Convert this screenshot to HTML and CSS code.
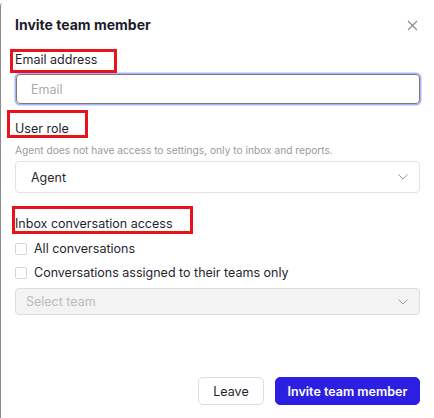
FILE: index.html
```html
<!DOCTYPE html>
<html>
<head>
<meta charset="utf-8">
<link rel="stylesheet" href="styles.css">
</head>
<body>
<div class="dialog">
  <div class="header">
    <h1 class="title">Invite team member</h1>
    <svg class="close" width="11" height="11" viewBox="0 0 11 11"><path d="M1 1L10 10M10 1L1 10" stroke="#8a8a8a" stroke-width="1.1" fill="none"/></svg>
  </div>

  <div class="label label-email">Email address</div>
  <div class="input focus"><span class="placeholder">Email</span></div>

  <div class="label label-role">User role</div>
  <div class="help">Agent does not have access to settings, only to inbox and reports.</div>
  <div class="select">
    <span class="value">Agent</span>
    <svg class="chev" width="10" height="6" viewBox="0 0 10 6"><path d="M0.5 0.5L5 5L9.5 0.5" stroke="#9a9a9a" stroke-width="1" fill="none"/></svg>
  </div>

  <div class="label label-inbox">Inbox conversation access</div>
  <div class="check-row first"><span class="box"></span><span>All conversations</span></div>
  <div class="check-row"><span class="box"></span><span>Conversations assigned to their teams only</span></div>
  <div class="select disabled">
    <span class="value">Select team</span>
    <svg class="chev" width="10" height="6" viewBox="0 0 10 6"><path d="M0.5 0.5L5 5L9.5 0.5" stroke="#9a9a9a" stroke-width="1" fill="none"/></svg>
  </div>

  <div class="footer">
    <button class="btn btn-leave">Leave</button>
    <button class="btn btn-primary">Invite team member</button>
  </div>

  <div class="mark mark-email"></div>
  <div class="mark mark-role"></div>
  <div class="mark mark-inbox"></div>
</div>
</body>
</html>
```
FILE: styles.css
```css
html, body {
  margin: 0;
  padding: 0;
  background: #ffffff;
}
body {
  font-family: Inter, "Noto Sans", sans-serif;
  color: #1f1f2b;
  width: 434px;
  height: 418px;
  overflow: hidden;
}
.dialog {
  position: relative;
  box-sizing: border-box;
  height: 415px;
  margin-top: 3px;
  border-left: 1px solid #8c8c8c;
  border-top-left-radius: 3px;
  padding: 13px 14px 0 14px;
  display: flex;
  flex-direction: column;
}
.header {
  display: flex;
  align-items: center;
  justify-content: space-between;
  height: 18px;
}
.title {
  margin: 0;
  font-size: 14px;
  font-weight: 700;
  line-height: 18px;
  color: #1c1c2c;
}
.close {
  margin-right: 2px;
}
.label {
  font-size: 12.5px;
  line-height: 16px;
  color: #1f1f2b;
}
.label-email { margin-top: 18px; }
.input {
  margin-top: 6px;
  height: 30px;
  box-sizing: border-box;
  border: 1px solid #7a7a7a;
  border-radius: 4px;
  margin-left: 1px;
  display: flex;
  align-items: center;
  padding-left: 14px;
}
.input.focus {
  box-shadow: 0 0 0 1.5px #a9b4f8;
}
.placeholder {
  font-size: 12.5px;
  color: #ababab;
}
.label-role { margin-top: 17px; }
.help {
  margin-top: 6px;
  font-size: 10.2px;
  line-height: 14px;
  color: #9b9b9b;
}
.select {
  margin-top: 4px;
  height: 32px;
  box-sizing: border-box;
  border: 1px solid #e3e3e3;
  border-radius: 4px;
  display: flex;
  align-items: center;
  justify-content: space-between;
  padding: 0 11px 0 15px;
}
.select .value {
  font-size: 12.5px;
  color: #2a2a2a;
}
.label-inbox { margin-top: 23px; }
.check-row {
  display: flex;
  align-items: center;
  gap: 7px;
  font-size: 12.5px;
  line-height: 16px;
  color: #262630;
  margin-top: 8px;
}
.check-row.first { margin-top: 9px; }
.box {
  width: 10px;
  height: 10px;
  border: 1px solid #d6d6d6;
  border-radius: 2px;
  background: #fff;
}
.select.disabled {
  margin-top: 7px;
  height: 27px;
  background: #f3f3f3;
  border-color: #dcdcdc;
  padding-left: 10px;
}
.select.disabled .value {
  color: #bcbcbc;
}
.footer {
  margin-top: auto;
  margin-bottom: 13px;
  display: flex;
  justify-content: flex-end;
  gap: 11px;
}
.btn {
  font-family: Inter, "Noto Sans", sans-serif;
  font-size: 12.5px;
  height: 28px;
  border-radius: 5px;
  box-sizing: border-box;
  cursor: pointer;
}
.btn-leave {
  width: 66px;
  background: #fff;
  border: 1px solid #dedede;
  color: #1f1f2b;
}
.btn-primary {
  width: 145px;
  background: #2c1fe2;
  border: 1px solid #2c1fe2;
  color: #ffffff;
  font-weight: 600;
}
.mark {
  position: absolute;
  border: 3px solid #e8131b;
  box-sizing: border-box;
  pointer-events: none;
}
.mark-email { left: 9px; top: 46px; width: 107px; height: 24px; }
.mark-role { left: 6px; top: 107px; width: 81px; height: 28px; }
.mark-inbox { left: 11px; top: 203px; width: 181px; height: 28px; }
```
